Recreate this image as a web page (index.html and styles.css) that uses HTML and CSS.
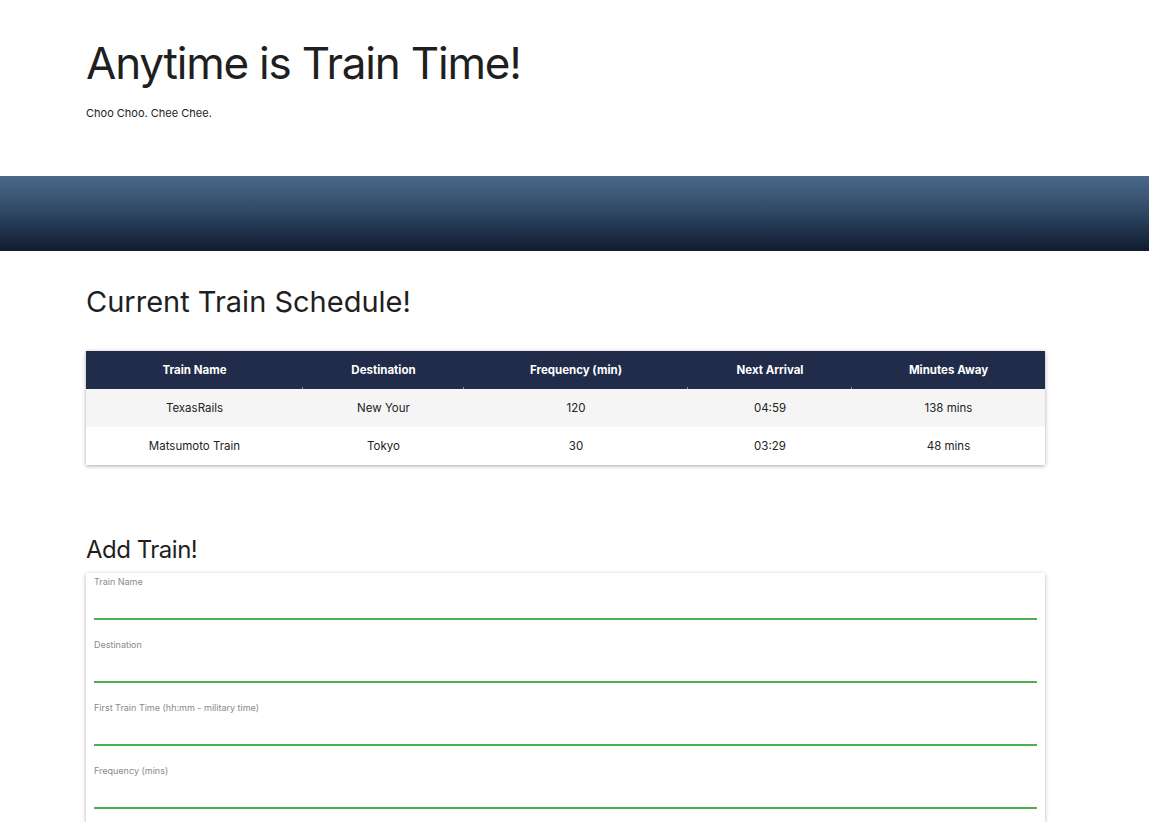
FILE: index.html
```html
<!DOCTYPE html>
<html lang="en">
<head>
<meta charset="utf-8">
<title>Train Time</title>
<link rel="stylesheet" href="styles.css">
</head>
<body>
<header class="hero">
  <div class="wrap">
    <h1 class="hero-title">Anytime is Train Time!</h1>
    <p class="hero-sub">Choo Choo. Chee Chee.</p>
  </div>
</header>
<div class="band"></div>
<main class="wrap">
  <h2 class="section-title">Current Train Schedule!</h2>
  <table class="schedule">
    <thead>
      <tr>
        <th class="c1">Train Name</th>
        <th class="c2">Destination</th>
        <th class="c3">Frequency (min)</th>
        <th class="c4">Next Arrival</th>
        <th class="c5">Minutes Away</th>
      </tr>
    </thead>
    <tbody>
      <tr class="striped">
        <td>TexasRails</td>
        <td>New Your</td>
        <td>120</td>
        <td>04:59</td>
        <td>138 mins</td>
      </tr>
      <tr>
        <td>Matsumoto Train</td>
        <td>Tokyo</td>
        <td>30</td>
        <td>03:29</td>
        <td>48 mins</td>
      </tr>
    </tbody>
  </table>
  <h2 class="add-title">Add Train!</h2>
  <form class="card">
    <div class="field">
      <label class="field-label" for="name">Train Name</label>
      <input class="field-input" id="name" type="text">
    </div>
    <div class="field">
      <label class="field-label" for="dest">Destination</label>
      <input class="field-input" id="dest" type="text">
    </div>
    <div class="field">
      <label class="field-label" for="first">First Train Time (hh:mm - military time)</label>
      <input class="field-input" id="first" type="text">
    </div>
    <div class="field">
      <label class="field-label" for="freq">Frequency (mins)</label>
      <input class="field-input" id="freq" type="text">
    </div>
  </form>
</main>
</body>
</html>
```
FILE: styles.css
```css
html, body {
  margin: 0;
  padding: 0;
  background: #fff;
}
body {
  font-family: Inter, "Liberation Sans", sans-serif;
  color: #212529;
  font-size: 12px;
}
.wrap {
  margin-left: 86px;
  width: 959px;
}
.hero {
  padding-top: 36px;
  padding-bottom: 55px;
}
.hero-title {
  margin: 0;
  font-size: 44px;
  font-weight: 400;
  line-height: 54px;
  letter-spacing: -1.2px;
  color: #1f1f1f;
}
.hero-sub {
  margin: 15px 0 0;
  font-size: 11px;
  line-height: 16px;
  color: #222;
}
.band {
  height: 75px;
  background: linear-gradient(to bottom, #4a6a89 0%, #2d4663 50%, #0f1b2f 100%);
}
.section-title {
  margin: 34px 0 0;
  font-size: 29px;
  font-weight: 400;
  line-height: 1.2;
  color: #1f1f1f;
}
.schedule {
  margin-top: 31px;
  width: 959px;
  border-collapse: collapse;
  table-layout: fixed;
  box-shadow: 0 1px 4px rgba(0, 0, 0, 0.35);
}
.schedule th {
  position: relative;
  height: 38px;
  padding: 0;
  background: #212b4a;
  color: #fff;
  font-size: 11.5px;
  font-weight: 700;
  text-align: center;
}
.schedule th::after {
  content: "";
  position: absolute;
  right: 0;
  bottom: 0;
  width: 1px;
  height: 2px;
  background: #8a91a6;
}
.schedule th.c5::after {
  display: none;
}
.c1 { width: 217px; }
.c2 { width: 161px; }
.c3 { width: 224px; }
.c4 { width: 164px; }
.c5 { width: 193px; }
.schedule td {
  height: 38px;
  padding: 0;
  text-align: center;
  font-size: 11.5px;
  color: #222;
  background: #fff;
}
.schedule tr.striped td {
  background: #f5f5f5;
}
.add-title {
  margin: 70px 0 0;
  font-size: 24px;
  font-weight: 400;
  line-height: 30px;
  letter-spacing: -0.5px;
  color: #1f1f1f;
}
.card {
  margin-top: 8px;
  padding: 3px 8px 30px;
  background: #fff;
  box-shadow: 0 1px 4px rgba(0, 0, 0, 0.3);
  display: flex;
  flex-direction: column;
  gap: 19px;
}
.field {
  display: flex;
  flex-direction: column;
}
.field-label {
  font-size: 9px;
  line-height: 12px;
  color: #8a8a8a;
}
.field-input {
  height: 30px;
  margin: 0;
  padding: 0;
  border: 0;
  border-bottom: 2px solid #4caf50;
  outline: none;
  background: transparent;
  box-sizing: content-box;
  font-family: inherit;
}
```
